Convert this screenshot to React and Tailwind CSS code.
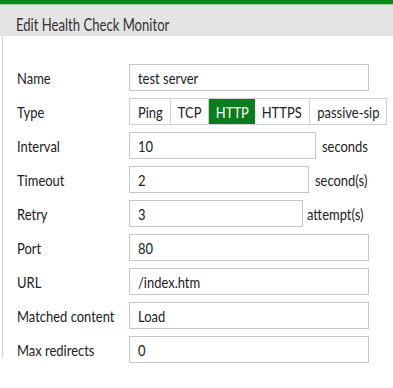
const T = ({ children, c = "" }) => (
  <span className={`inline-block whitespace-nowrap scale-x-[0.81] origin-left ${c}`}>{children}</span>
);
const TC = ({ children }) => (
  <span className="inline-block whitespace-nowrap scale-x-[0.81] origin-center">{children}</span>
);

const Input = ({ value, w, suffix, gap = "ml-[6px]" }) => (
  <div className="flex items-center">
    <div className={`h-[27px] ${w} border border-[#c6c6c6] bg-white flex items-center pl-[8px] text-[16px] text-[#222]`}>
      <T>{value}</T>
    </div>
    {suffix && (
      <span className={`${gap} text-[16px] text-[#222]`}>
        <T>{suffix}</T>
      </span>
    )}
  </div>
);

const Row = ({ label, children }) => (
  <div className="flex items-center h-[27px]">
    <div className="w-[112px] text-[16px] text-[#222]">
      <T>{label}</T>
    </div>
    {children}
  </div>
);

export default function App() {
  return (
    <div className="w-[393px] h-[388px] bg-white font-['Lato',sans-serif] overflow-hidden">
      <div className="h-[4px] bg-[#0b8a17]" />
      <div className="h-[1px] bg-[#a9cfa9]" />
      <div className="h-[31px] bg-[#e4e4e4] pl-[16px] pt-[11px] text-[17px] leading-[17px] text-[#333]">
        <span className="inline-block whitespace-nowrap scale-x-[0.77] origin-left">Edit Health Check Monitor</span>
      </div>
      <div className="ml-[2px] border-l border-[#d4d4d4] h-[322px] pt-[28px] pl-[14px] flex flex-col gap-[7px]">
        <Row label="Name"><Input value="test server" w="w-[240px]" /></Row>
        <Row label="Type">
          <div className="flex h-[27px] border border-[#cfcfcf] text-[16px] text-[#222]">
            <div className="w-[41px] flex items-center justify-center border-r border-[#cfcfcf]"><TC>Ping</TC></div>
            <div className="w-[38px] flex items-center justify-center border-r border-[#cfcfcf]"><TC>TCP</TC></div>
            <div className="w-[46px] flex items-center justify-center bg-[#0a7d1c] text-white"><TC>HTTP</TC></div>
            <div className="w-[55px] flex items-center justify-center border-r border-[#cfcfcf]"><TC>HTTPS</TC></div>
            <div className="w-[76px] flex items-center justify-center"><TC>passive-sip</TC></div>
          </div>
        </Row>
        <Row label="Interval"><Input value="10" w="w-[187px]" suffix="seconds" /></Row>
        <Row label="Timeout"><Input value="2" w="w-[180px]" suffix="second(s)" /></Row>
        <Row label="Retry"><Input value="3" w="w-[174px]" suffix="attempt(s)" gap="ml-[4px]" /></Row>
        <Row label="Port"><Input value="80" w="w-[240px]" /></Row>
        <Row label="URL"><Input value="/index.htm" w="w-[240px]" /></Row>
        <Row label="Matched content"><Input value="Load" w="w-[240px]" /></Row>
        <Row label="Max redirects"><Input value="0" w="w-[240px]" /></Row>
      </div>
    </div>
  );
}
